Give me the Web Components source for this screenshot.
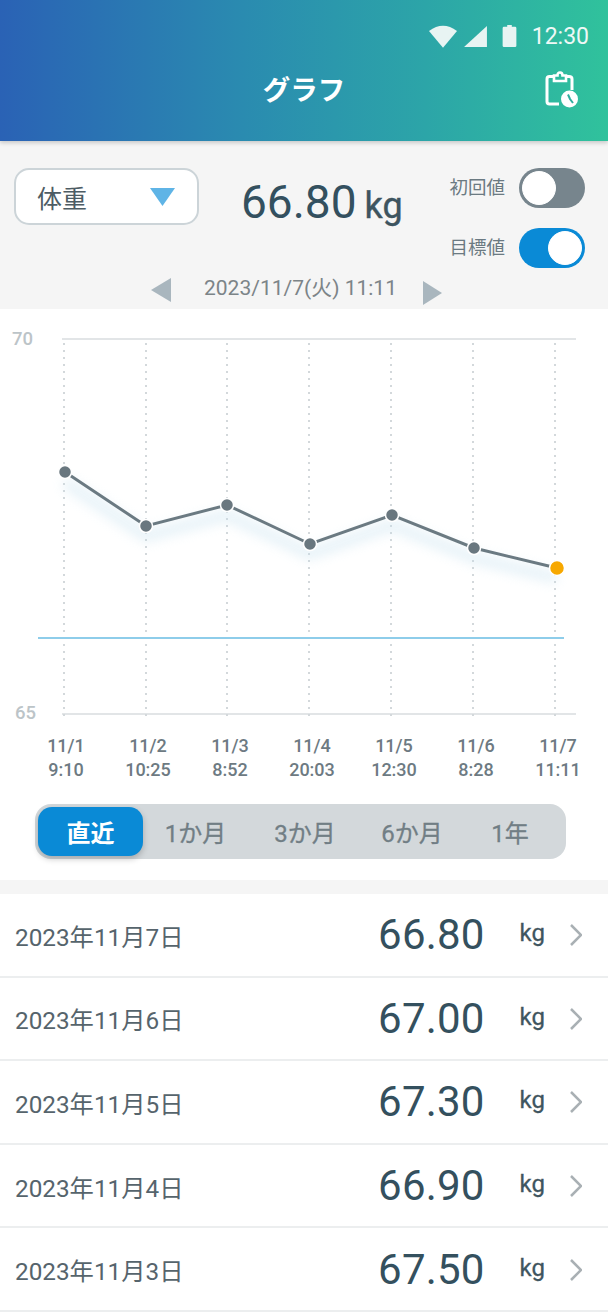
<!DOCTYPE html>
<html lang="ja"><head><meta charset="utf-8"><title>グラフ</title>
<style>
html,body{margin:0;padding:0;background:#f5f5f5}
body{width:608px;height:1312px;overflow:hidden;font-family:Roboto,"Noto Sans CJK JP",sans-serif}
app-root{display:block}
</style></head><body>
<app-root></app-root>
<script>
const FONT='Roboto,"Noto Sans CJK JP",sans-serif';
function def(name,html){
  customElements.define(name,class extends HTMLElement{
    constructor(){super();this.attachShadow({mode:'open'});}
    connectedCallback(){ if(!this.shadowRoot.innerHTML) this.shadowRoot.innerHTML=typeof html==='function'?html(this):html; }
  });
}
def('app-header',`<style>
:host{display:flex;flex-direction:column;height:141px;box-sizing:border-box;background:linear-gradient(90deg,#2a62b5 0%,#2a8bb0 40%,#2ca5a8 70%,#30c29c 100%);box-shadow:0 2px 4px rgba(0,0,0,.18);position:relative;z-index:2;color:#fff;font-family:${FONT}}
.status{display:flex;align-items:center;justify-content:flex-end;height:28px;margin-top:22px;padding-right:19px}
.status svg{display:block}
.time{font-size:23px;margin-left:15px;color:#eef8f6;line-height:28px;position:relative;top:1px}
.title{position:relative;flex:1;display:flex;align-items:center;justify-content:center;padding-bottom:10px}
h1{margin:0;font-size:27.500px;font-weight:700;line-height:36px;}
.ic{position:absolute;right:29px;top:21px}
</style>
<div class="status">
<svg width="28" height="23" viewBox="0 0 30 24"><path d="M0 6Q15-5 30 6L15 24Z" fill="#e8f4f3"/></svg>
<svg style="margin-left:7px" width="23" height="21" viewBox="0 0 24 22"><path d="M24 0V22H0Z" fill="#e8f4f3"/></svg>
<svg style="margin-left:15px" width="15" height="22" viewBox="0 0 15 24"><path d="M5 2V0H10V2H13.5Q15 2 15 3.500V22.500Q15 24 13.500 24H1.500Q0 24 0 22.500V3.500Q0 2 1.500 2Z" fill="#e8f4f3"/></svg>
<span class="time">12:30</span></div>
<div class="title"><h1>グラフ</h1>
<svg class="ic" width="34" height="38" viewBox="0 0 34 38" fill="none" stroke="#fff" stroke-width="3"><path d="M14 33H4.500Q2 33 2 30.500V8Q2 5.500 4.500 5.500H9M20 5.500H24Q27 5.500 27 8V19"/><path d="M9 10V4.500H12.500Q12.500 1.500 15 1.500T17.500 4.500H21V10Z" stroke-width="2.600"/><circle cx="24.500" cy="28" r="8.500" fill="#fff" stroke="none"/><path d="M23 23.500L25 28L28 32" stroke="#2eae9f" stroke-width="2"/></svg>
</div>`);

def('wave-toggle',h=>`<style>
:host{display:flex;align-items:center;gap:14px;height:40px}
.lab{font:400 18.500px/24px ${FONT};color:#6b7a82;white-space:nowrap}
.tr{width:66px;height:40px;border-radius:20px;box-sizing:border-box;display:flex;align-items:center;padding:3px;background:${h.hasAttribute('on')?'#0a8ad6':'#77858d'};justify-content:${h.hasAttribute('on')?'flex-end':'flex-start'}}
.kn{width:32px;height:32px;border-radius:50%;background:#fff;border:1px solid #fff;}
</style><span class="lab"><slot></slot></span><div class="tr"><div class="kn"></div></div>`);

def('measure-panel',`<style>
:host{display:flex;flex-direction:column;height:168px;box-sizing:border-box;background:#f5f5f5;padding:27px 23px 0 14px;font-family:${FONT}}
.top{display:flex;align-items:flex-start}
.sel{width:185px;height:57px;box-sizing:border-box;background:#fff;border:2px solid #ccd4d8;border-radius:15px;display:flex;align-items:center;justify-content:space-between;padding:0 22px 0 21px;font-size:25px;color:#4d5c64;margin-right:42px}
.val{display:flex;align-items:baseline;margin-top:4px;color:#33505f;}
.num{font-size:46px;line-height:60px;font-weight:400}
.unit{font-size:36px;font-weight:400;margin-left:8px;color:#3d545f;-webkit-text-stroke:.4px #3d545f}
.tg{margin-left:auto;display:flex;flex-direction:column;gap:20px}
.date{display:flex;align-items:center;justify-content:center;color:#7c8488;font-size:21px;line-height:28px;margin-top:4px;height:36px;padding-right:6px}
.date svg{display:block}
.date span{margin:0 26px 0 33px;position:relative;top:-2px}
</style>
<div class="top">
<div class="sel"><span>体重</span><svg width="25" height="18" viewBox="0 0 25 18"><path d="M0 0H25L12.500 18Z" fill="#5fb4e6"/></svg></div>
<div class="val"><span class="num">66.80</span><span class="unit">kg</span></div>
<div class="tg"><wave-toggle>初回値</wave-toggle><wave-toggle on>目標値</wave-toggle></div>
</div>
<div class="date"><svg width="20" height="24" viewBox="0 0 20 24"><path d="M20 0V24L0 12Z" fill="#a9b6be"/></svg><span>2023/11/7(火) 11:11</span><svg width="19" height="24" viewBox="0 0 19 24" style="position:relative;top:3px"><path d="M0 0V24L19 12Z" fill="#a9b6be"/></svg></div>`);

const xs=[64,146,227,309,391,473,555];
const pts=[[65,163],[146,217],[227,196],[310,235],[392,206],[474,239],[557,259]];
def('weight-chart',`<style>
:host{display:block;background:#fff;font-family:${FONT};padding-bottom:21px}
svg{display:block}
.x{display:grid;grid-template-columns:repeat(7,82px);padding-left:25px;margin-top:-1px}
.x div{text-align:center;font-size:18px;line-height:24px;font-weight:500;color:#6d7a82;white-space:nowrap}
</style>
<svg width="608" height="426" viewBox="0 0 608 426">
<defs><filter id="b" x="-10%" y="-60%" width="120%" height="220%"><feGaussianBlur stdDeviation="6"/></filter></defs>
<path d="M62 30H576M62 405H576" stroke="#e2e5e7" stroke-width="2" fill="none"/>
${xs.map(x=>`<path d="M${x} 34V412" stroke="#d3d8db" stroke-width="2" stroke-dasharray="2 5" fill="none"/>`).join('')}
<text x="12" y="36" font-size="18.500" font-weight="500" fill="#bcc4c8">70</text>
<text x="15" y="410" font-size="18.500" font-weight="500" fill="#bcc4c8">65</text>
<polyline points="${pts.map(p=>p[0]+','+(p[1]+10)).join(' ')}" fill="none" stroke="#c4e0ee" stroke-width="12" opacity=".4" filter="url(#b)"/>
<path d="M38 329H564" stroke="#8ecdea" stroke-width="2"/>
<polyline points="${pts.map(p=>p.join(',')).join(' ')}" fill="none" stroke="#6b7a82" stroke-width="3"/>
${pts.slice(0,6).map(p=>`<circle cx="${p[0]}" cy="${p[1]}" r="6.500" fill="#69777f" stroke="#fff" stroke-width="1.500"/>`).join('')}
<circle cx="557" cy="259" r="7.500" fill="#f7a800" stroke="#fff" stroke-width="1.500"/>
</svg>
<div class="x"><div>11/1<br>9:10</div><div>11/2<br>10:25</div><div>11/3<br>8:52</div><div>11/4<br>20:03</div><div>11/5<br>12:30</div><div>11/6<br>8:28</div><div>11/7<br>11:11</div></div>
<slot></slot>`);

def('period-tabs',`<style>
:host{display:grid;grid-template-columns:105px 105px 114px 100px 96px;margin:22px 42px 0 35px;padding:3px;height:49px;background:#d3d8db;border-radius:16px;font-family:${FONT}}
div{display:flex;align-items:center;justify-content:center;font-size:24px;color:#717e85;font-weight:400;white-space:nowrap;-webkit-text-stroke:.3px #717e85}
.a{background:#0a8ad6;color:#fff;font-weight:700;border-radius:14px;box-shadow:0 3px 6px rgba(0,0,0,.22);-webkit-text-stroke:0}
</style><div class="a">直近</div><div>1か月</div><div>3か月</div><div>6か月</div><div>1年</div>`);

def('record-row',h=>`<style>
:host{display:flex;align-items:center;height:83.6px;box-sizing:border-box;background:#fff;border-bottom:2px solid #eceeef;padding:1px 0 0 15px;font-family:${FONT}}
.d{font-size:24.300px;color:#56646c;flex:1;white-space:nowrap}
.v{font-size:42px;color:#34505e;line-height:50px;letter-spacing:.2px}
.u{font-size:24px;font-weight:400;color:#3f5560;margin-left:35px;position:relative;top:-2px;-webkit-text-stroke:.3px #3f5560}
svg{margin:0 26px 0 25px;display:block}
</style><span class="d">${h.getAttribute('date')}</span><span class="v">${h.getAttribute('val')}</span><span class="u">kg</span>
<svg width="12" height="22" viewBox="0 0 12 22"><path d="M1 1L11 11L1 21" fill="none" stroke="#a9b0b4" stroke-width="2.500"/></svg>`);

def('app-root',`<style>:host{display:block;height:1312px;background:#f5f5f5}
.list{margin-top:14px;display:block}</style>
<app-header></app-header><measure-panel></measure-panel>
<weight-chart><period-tabs></period-tabs></weight-chart>
<div class="list">
<record-row date="2023年11月7日" val="66.80"></record-row>
<record-row date="2023年11月6日" val="67.00"></record-row>
<record-row date="2023年11月5日" val="67.30"></record-row>
<record-row date="2023年11月4日" val="66.90"></record-row>
<record-row date="2023年11月3日" val="67.50"></record-row>
</div>`);
</script>
</body></html>
